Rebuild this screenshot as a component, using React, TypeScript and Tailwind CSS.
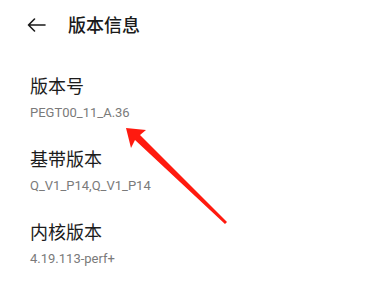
import React from "react";

const items = [
  { label: "版本号", value: "PEGT00_11_A.36" },
  { label: "基带版本", value: "Q_V1_P14,Q_V1_P14" },
  { label: "内核版本", value: "4.19.113-perf+" },
];

export default function App() {
  return (
    <div className="relative h-[285px] w-[386px] overflow-hidden bg-white font-['Roboto','Noto_Sans_CJK_SC',sans-serif]">
      <header className="flex h-[50px] items-center pl-[27px]">
        <svg width="19" height="14" viewBox="0 0 19 14" fill="none" stroke="#1a1a1a" strokeWidth="1.6" strokeLinecap="round" strokeLinejoin="round">
          <path d="M18 7H1.5M7.5 1L1.5 7l6 6" />
        </svg>
        <h1 className="ml-[22px] text-[18px] font-medium text-[#1a1a1a]">版本信息</h1>
      </header>
      <div className="flex flex-col gap-[22px] pl-[30px] pt-[24px]">
        {items.map((it) => (
          <div key={it.label} className="flex flex-col">
            <span className="text-[18px] leading-[26px] text-[#1c1c1c]">{it.label}</span>
            <span className="mt-[1px] text-[13px] leading-[24px] text-[#7a7a7a]">{it.value}</span>
          </div>
        ))}
      </div>
      <svg className="absolute left-0 top-0" width="386" height="285" viewBox="0 0 386 285">
        <polygon points="126,128 146,130 140,135 227,222 225,224 135,140 131,148" fill="#ff1a0f" />
      </svg>
    </div>
  );
}
